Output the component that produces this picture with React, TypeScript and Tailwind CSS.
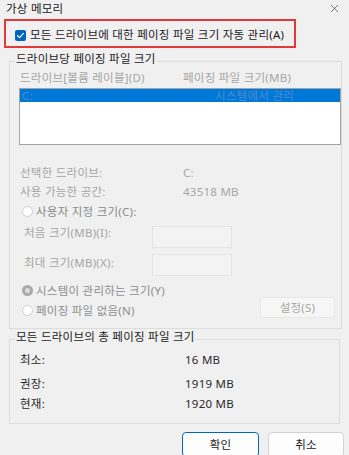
import React from 'react';
import { X } from 'lucide-react';

const Radio: React.FC<{ checked?: boolean }> = ({ checked }) =>
  checked ? (
    <span className="flex h-[11px] w-[11px] shrink-0 items-center justify-center rounded-full bg-[#a9a9a9]">
      <span className="h-[5px] w-[5px] rounded-full bg-[#dedede]" />
    </span>
  ) : (
    <span className="h-[11px] w-[11px] shrink-0 rounded-full border border-[#cfcfcf] bg-white" />
  );

const App: React.FC = () => {
  return (
    <div
      className="h-[455px] w-[349px] overflow-hidden bg-[#f0f0f0] text-[11.5px] tracking-[0.25px] text-[#1b1b1b]"
      style={{ fontFamily: '"Noto Sans", "Noto Sans CJK KR", sans-serif' }}
    >
      {/* title bar */}
      <div className="flex h-[17px] items-center justify-between pl-[6px] pr-[8px]">
        <span className="leading-[17px] text-[#222]">가상 메모리</span>
        <X size={13} strokeWidth={1.2} className="text-[#333]" />
      </div>

      {/* auto manage */}
      <div className="mx-[4px] mt-[2px] flex h-[29px] w-[292px] items-center gap-[4px] border-2 border-[#e0393a] pl-[9px] pt-[3px]">
        <span className="flex h-[11px] w-[11px] items-center justify-center rounded-[2px] bg-[#0067c0]">
          <svg width="9" height="9" viewBox="0 0 9 9" fill="none">
            <path d="M1.6 4.7 L3.6 6.6 L7.4 2.4" stroke="white" strokeWidth="1.2" strokeLinecap="round" strokeLinejoin="round" />
          </svg>
        </span>
        <span className="leading-[14px]">모든 드라이브에 대한 페이징 파일 크기 자동 관리(A)</span>
      </div>

      {/* per drive */}
      <fieldset className="mx-[9px] mt-[4px] w-[331px] border border-[#dcdcdc] pb-[7px]">
        <legend className="ml-[5px] px-[1px] pb-[5px] leading-[14px] text-[#1b1b1b]">드라이브당 페이징 파일 크기</legend>

        <div className="flex h-[13px] pl-[10px] leading-[13px] text-[#a6a6a6]">
          <span className="w-[163px]">드라이브[볼륨 레이블](D)</span>
          <span>페이징 파일 크기(MB)</span>
        </div>

        <div className="ml-[9px] mt-[4px] h-[57px] w-[322px] border border-[#a3a3a3] bg-white">
          <div className="flex h-[13px] bg-[#0078d7] pl-[2px] leading-[13px] text-[#4c8bd0]">
            <span className="w-[193px]">C:</span>
            <span>시스템에서 관리</span>
          </div>
        </div>

        <div className="mt-[18px] pl-[10px] leading-[19px] text-[#a6a6a6]">
          <div className="flex">
            <span className="w-[163px]">선택한 드라이브:</span>
            <span>C:</span>
          </div>
          <div className="flex">
            <span className="w-[163px]">사용 가능한 공간:</span>
            <span>43518 MB</span>
          </div>
        </div>

        <div className="flex h-[21px] items-center gap-[3px] pl-[12px] text-[#8a8a8a]">
          <Radio />
          <span>사용자 지정 크기(C):</span>
        </div>

        <div className="flex items-start pl-[14px] pt-[4px] text-[#a6a6a6]">
          <span className="w-[128px] leading-[14px]">처음 크기(MB)(I):</span>
          <span className="h-[22px] w-[80px] border border-[#e4e4e4] bg-[#f3f3f3]" />
        </div>
        <div className="flex items-start pl-[14px] pt-[6px] text-[#a6a6a6]">
          <span className="w-[128px] leading-[18px]">최대 크기(MB)(X):</span>
          <span className="h-[22px] w-[80px] border border-[#e4e4e4] bg-[#f3f3f3]" />
        </div>

        <div className="mt-[5px] flex justify-between pr-[6px]">
          <div className="pl-[12px] text-[#8e8e8e]">
            <div className="flex h-[19px] items-center gap-[3px]">
              <Radio checked />
              <span>시스템이 관리하는 크기(Y)</span>
            </div>
            <div className="flex h-[21px] items-center gap-[3px]">
              <Radio />
              <span>페이징 파일 없음(N)</span>
            </div>
          </div>
          <div className="mt-[16px] flex h-[21px] w-[75px] items-center justify-center rounded-[3px] border border-[#e8e8e8] bg-[#f6f6f6] text-[#a6a6a6]">
            설정(S)
          </div>
        </div>
      </fieldset>

      {/* totals */}
      <fieldset className="mx-[9px] mt-[1px] w-[331px] border border-[#dcdcdc] pb-[9px]">
        <legend className="ml-[5px] px-[1px] pb-[5px] leading-[14px] text-[#1b1b1b]">모든 드라이브의 총 페이징 파일 크기</legend>
        <div className="pl-[10px] leading-[20px] text-[#2a2a2a]">
          <div className="mt-[1px] flex">
            <span className="w-[165px]">최소:</span>
            <span>16 MB</span>
          </div>
          <div className="mt-[4px] flex">
            <span className="w-[165px]">권장:</span>
            <span>1919 MB</span>
          </div>
          <div className="flex">
            <span className="w-[165px]">현재:</span>
            <span>1920 MB</span>
          </div>
        </div>
      </fieldset>

      <div className="mt-[8px] flex justify-end gap-[9px] pr-[5px]">
        <button className="flex h-[25px] w-[77px] items-center justify-center rounded-[4px] border border-[#0067c0] bg-[#fdfdfd] text-[#1b1b1b]">
          확인
        </button>
        <button className="flex h-[25px] w-[76px] items-center justify-center rounded-[4px] border border-[#d3d3d3] bg-[#fdfdfd] text-[#1b1b1b]">
          취소
        </button>
      </div>
    </div>
  );
};

export default App;
